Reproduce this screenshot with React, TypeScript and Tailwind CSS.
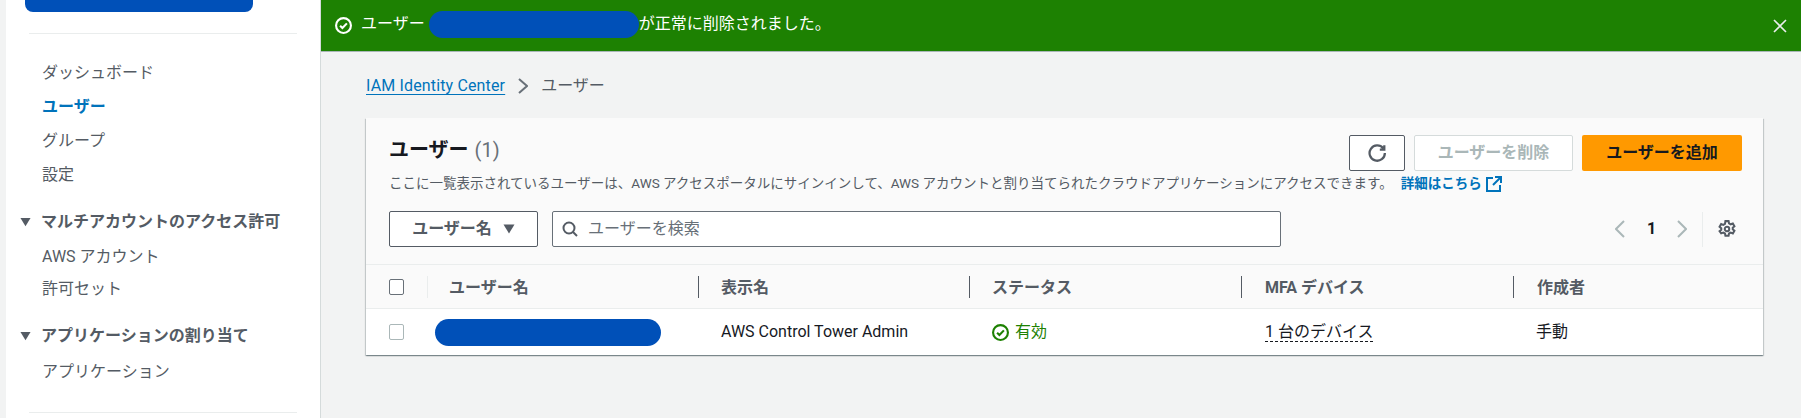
import React from "react";

const font = { fontFamily: 'Roboto,"Noto Sans CJK JP",sans-serif' };

function CheckCircle({ className }: { className: string }) {
  return (
    <svg viewBox="0 0 16 16" fill="none" stroke="currentColor" strokeWidth="2" className={className}>
      <circle cx="8" cy="8" r="7" />
      <path d="M4.8 8.2 7 10.4l4.2-4.4" />
    </svg>
  );
}

function Triangle({ className }: { className: string }) {
  return (
    <svg viewBox="0 0 12 10" fill="currentColor" className={className}>
      <path d="M0.5 0.5h11L6 9.5z" />
    </svg>
  );
}

function NavItem({ children, active }: { children: React.ReactNode; active?: boolean }) {
  return (
    <div className={`h-[34px] pl-[36px] flex items-center text-[16px] ${active ? "font-bold text-[#0073bb]" : "text-[#545b64]"}`}>
      {children}
    </div>
  );
}

function NavHeader({ children }: { children: React.ReactNode }) {
  return (
    <div className="h-[34px] pl-[14px] flex items-center gap-[10px] text-[16px] font-bold text-[#545b64]">
      <Triangle className="w-[11px] h-[10px] shrink-0" />
      <span>{children}</span>
    </div>
  );
}

function HeaderCell({ children, cls, strong }: { children: React.ReactNode; cls: string; strong?: boolean }) {
  return (
    <div className={`${cls} shrink-0 h-[22px] flex items-center border-l text-[16px] font-bold text-[#545b64] ${strong ? "border-[#545b64]" : "border-[#eaeded]"}`}>
      <span className="mt-[2px]">{children}</span>
    </div>
  );
}

export default function App() {
  return (
    <div className="h-[418px] w-[1801px] overflow-hidden flex bg-[#f2f3f3] text-[#16191f]" style={font}>
      <aside className="ml-[6px] w-[314px] shrink-0 h-full bg-white border-r border-[#d5dbdb] box-content">
        <div className="ml-[19px] w-[228px] h-[12px] bg-[#0050b8] rounded-b-[8px]" />
        <div className="mx-[23px] mt-[21px] border-t border-[#eaeded]" />
        <div className="mt-[22px]">
          <NavItem>ダッシュボード</NavItem>
          <NavItem active>ユーザー</NavItem>
          <NavItem>グループ</NavItem>
          <NavItem>設定</NavItem>
        </div>
        <div className="mt-[13px]">
          <NavHeader>マルチアカウントのアクセス許可</NavHeader>
          <div className="mt-[1px]">
            <NavItem>AWS アカウント</NavItem>
            <div className="-mt-[2px]"><NavItem>許可セット</NavItem></div>
          </div>
        </div>
        <div className="mt-[13px]">
          <NavHeader>アプリケーションの割り当て</NavHeader>
          <div className="mt-[2px]"><NavItem>アプリケーション</NavItem></div>
        </div>
        <div className="mx-[23px] mt-[23px] border-t border-[#eaeded]" />
      </aside>

      <main className="flex-1 min-w-0">
        <div className="h-[52px] bg-[#1d8102] border-b border-[#aab7b8] text-white flex items-center pl-[14px] pr-[13px] text-[16px]">
          <CheckCircle className="w-[17px] h-[17px] shrink-0" />
          <div className="flex items-center mb-[3px]">
            <span className="ml-[9px]">ユーザー</span>
            <span className="ml-[4px] w-[210px] h-[27px] rounded-full bg-[#0050b8]" />
            <span>が正常に削除されました。</span>
          </div>
          <svg viewBox="0 0 16 16" fill="none" stroke="#eaeded" strokeWidth="1.6" className="ml-auto w-[16px] h-[16px]">
            <path d="M2 2l12 12M14 2 2 14" />
          </svg>
        </div>

        <div className="mt-[23px] ml-[45px] flex items-center h-[22px] text-[16px]">
          <span className="text-[#0073bb] underline underline-offset-[3px] tracking-[0.15px]">IAM Identity Center</span>
          <svg viewBox="0 0 10 16" fill="none" stroke="#687078" strokeWidth="2" className="ml-[13px] w-[10px] h-[16px]">
            <path d="M1 1l8 7-8 7" />
          </svg>
          <span className="ml-[13px] text-[#545b64]">ユーザー</span>
        </div>

        <section className="mt-[21px] ml-[45px] w-[1397px] h-[237px] bg-[#fafafa] shadow-[0_1px_1px_0_rgba(0,28,36,0.3),1px_1px_1px_0_rgba(0,28,36,0.15),-1px_1px_1px_0_rgba(0,28,36,0.15)] flex flex-col">
          <div className="h-[147px] pl-[23px] pr-[21px] pt-[17px] border-b border-[#eaeded]">
            <div className="flex items-start h-[36px]">
              <div className="flex items-baseline">
                <span className="text-[20px] font-bold">ユーザー</span>
                <span className="ml-[6px] text-[20px] text-[#687078]">(1)</span>
              </div>
              <div className="ml-auto flex gap-[9px]">
                <button className="w-[56px] h-[36px] bg-white border border-[#545b64] rounded-[2px] flex items-center justify-center text-[#545b64]">
                  <svg viewBox="0 0 16 16" fill="none" stroke="currentColor" strokeWidth="2" className="w-[18px] h-[18px]">
                    <path d="M13.5 3.8A6.8 6.8 0 1 0 15 8M14.5 1v4h-4" />
                  </svg>
                </button>
                <button className="w-[159px] h-[36px] bg-white border border-[#d5dbdb] rounded-[2px] text-[16px] font-bold text-[#aab7b8]">ユーザーを削除</button>
                <button className="w-[160px] h-[36px] bg-[#ff9900] rounded-[2px] text-[16px] font-bold text-[#16191f]">ユーザーを追加</button>
              </div>
            </div>
            <div className="mt-[2px] h-[21px] flex items-center text-[13.5px] text-[#545b64] whitespace-nowrap">
              <span>ここに一覧表示されているユーザーは、AWS アクセスポータルにサインインして、AWS アカウントと割り当てられたクラウドアプリケーションにアクセスできます。</span>
              <span className="ml-[8px] font-bold text-[#0073bb]">詳細はこちら</span>
              <svg viewBox="0 0 16 16" fill="none" stroke="#0073bb" strokeWidth="2" className="ml-[4px] w-[16px] h-[16px]">
                <path d="M7 2H1v13h13V9M9 1h6v6M15 1 7 9" />
              </svg>
            </div>
            <div className="mt-[17px] flex items-center h-[36px]">
              <button className="w-[149px] h-[36px] bg-white border border-[#545b64] rounded-[2px] flex items-center justify-center gap-[11px] text-[16px] font-bold text-[#545b64]">
                ユーザー名
                <Triangle className="w-[12px] h-[10px]" />
              </button>
              <div className="ml-[14px] w-[729px] h-[36px] bg-white border border-[#687078] rounded-[2px] flex items-center pl-[9px] text-[16px] text-[#687078]">
                <svg viewBox="0 0 16 16" fill="none" stroke="#545b64" strokeWidth="2" className="w-[16px] h-[16px] shrink-0">
                  <circle cx="7" cy="7" r="5.5" />
                  <path d="M11 11l4 4" />
                </svg>
                <span className="ml-[10px]">ユーザーを検索</span>
              </div>
              <div className="ml-auto flex items-center">
                <svg viewBox="0 0 10 18" fill="none" stroke="#aab7b8" strokeWidth="2" className="w-[10px] h-[18px]"><path d="M9 1 1 9l8 8" /></svg>
                <span className="ml-[22px] text-[16px] font-bold w-[8px] text-center">1</span>
                <svg viewBox="0 0 10 18" fill="none" stroke="#aab7b8" strokeWidth="2" className="ml-[22px] w-[10px] h-[18px]"><path d="M1 1l8 8-8 8" /></svg>
                <div className="ml-[15px] h-[35px] border-l border-[#eaeded]" />
                <svg viewBox="0 0 16 16" fill="none" stroke="#545b64" strokeWidth="1.8" className="ml-[15px] mr-[6px] w-[18px] h-[18px]">
                  <circle cx="8" cy="8" r="2" />
                  <path d="M6.6 1h2.8l.4 2 1.5.8 1.9-.7 1.4 2.4-1.5 1.3v1.4l1.5 1.3-1.4 2.4-1.9-.7-1.5.8-.4 2H6.6l-.4-2-1.5-.8-1.9.7L1.4 10l1.5-1.3V7.3L1.4 6l1.4-2.4 1.9.7 1.5-.8z" />
                </svg>
              </div>
            </div>
          </div>

          <div className="h-[44px] flex items-center pl-[23px] border-b border-[#eaeded]">
            <div className="w-[15px] h-[16px] bg-white border border-[#687078] rounded-[2px] shrink-0" />
            <div className="ml-[23px] flex">
              <HeaderCell cls="w-[271px] pl-[21px]">ユーザー名</HeaderCell>
              <HeaderCell cls="w-[271px] pl-[22px]" strong>表示名</HeaderCell>
              <HeaderCell cls="w-[272px] pl-[22px]" strong>ステータス</HeaderCell>
              <HeaderCell cls="w-[272px] pl-[23px]" strong>MFA デバイス</HeaderCell>
              <HeaderCell cls="w-[250px] pl-[23px]" strong>作成者</HeaderCell>
            </div>
          </div>

          <div className="flex-1 bg-white flex items-center pl-[23px] text-[16px] pb-[1px]">
            <div className="w-[15px] h-[16px] bg-white border border-[#aab7b8] rounded-[2px] shrink-0" />
            <div className="ml-[23px] flex items-center">
              <div className="w-[271px] pl-[8px]">
                <div className="w-[226px] h-[27px] mt-[1px] rounded-full bg-[#0050b8]" />
              </div>
              <div className="w-[271px] pl-[23px]">AWS Control Tower Admin</div>
              <div className="w-[272px] pl-[23px] flex items-center gap-[6px] text-[#1d8102]">
                <CheckCircle className="w-[17px] h-[17px] mt-[1px]" />
                <span>有効</span>
              </div>
              <div className="w-[272px] pl-[24px]">
                <span className="border-b border-dashed border-[#16191f]">1 台のデバイス</span>
              </div>
              <div className="w-[250px] pl-[23px]">手動</div>
            </div>
          </div>
        </section>
      </main>
    </div>
  );
}
